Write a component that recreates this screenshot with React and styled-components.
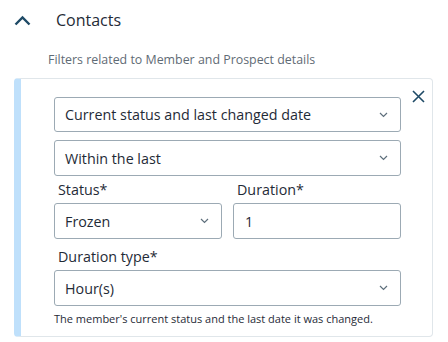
import React from "react";
import styled, { createGlobalStyle } from "styled-components";

const Global = createGlobalStyle`
  html, body { margin: 0; padding: 0; background: #ffffff; }
  body { font-family: "Open Sans", "Noto Sans", sans-serif; color: #1f2b37; }
  * { box-sizing: border-box; }
`;

const Page = styled.div`
  width: 448px;
  height: 342px;
  overflow: hidden;
  padding: 0 15px 0 14px;
`;

const Header = styled.div`
  display: flex;
  align-items: center;
  height: 40px;
`;

const Toggle = styled.span`
  display: flex;
  width: 42px;
  align-items: center;
  color: #1e4a66;
`;

const Title = styled.h2`
  margin: 0;
  font-size: 16px;
  font-weight: 400;
  color: #1f2b37;
`;

const Description = styled.p`
  margin: 12px 0 0 34px;
  font-size: 12.4px;
  line-height: 16px;
  color: #5f6b75;
`;

const Card = styled.div`
  position: relative;
  margin-top: 10px;
  border: 1px solid #e0e6ea;
  border-left: 7px solid #bfe0fb;
  border-radius: 4px;
  padding: 18px 31px 10px 33px;
  display: flex;
  flex-direction: column;
  gap: 8px;
`;

const Close = styled.button`
  position: absolute;
  top: 9px;
  right: 6px;
  width: 16px;
  height: 16px;
  padding: 0;
  border: none;
  background: none;
  color: #1e4a66;
  display: flex;
  align-items: center;
  justify-content: center;
`;

const Row = styled.div`
  display: grid;
  grid-template-columns: 168px 1fr;
  column-gap: 11px;
  margin-top: -4px;
`;

const Field = styled.div`
  display: flex;
  flex-direction: column;
`;

const Label = styled.label`
  font-size: 14.3px;
  line-height: 20px;
  padding-left: 4px;
  margin-bottom: 3px;
  color: #1f2b37;
`;

const Box = styled.div`
  height: ${(p) => p.$h || 36}px;
  border: 1px solid #9caab4;
  border-radius: 3px;
  display: flex;
  align-items: center;
  justify-content: space-between;
  padding: 0 12px 0 ${(p) => p.$pl || 10}px;
  font-size: 14.3px;
  color: #1f2b37;
  background: #fff;
`;

const Chevron = styled.span`
  display: flex;
  color: #5e6f7c;
`;

const Help = styled.div`
  font-size: 11px;
  line-height: 14px;
  color: #1f2b37;
  margin-top: -2px;
`;

const Down = () => (
  <Chevron>
    <svg width="9" height="6" viewBox="0 0 9 6">
      <path d="M1 1 L4.5 4.5 L8 1" fill="none" stroke="currentColor" strokeWidth="1.2" />
    </svg>
  </Chevron>
);

const Select = ({ children, h }) => (
  <Box $h={h}>
    <span>{children}</span>
    <Down />
  </Box>
);

export default function App() {
  return (
    <Page>
      <Global />
      <Header>
        <Toggle>
          <svg width="17" height="11" viewBox="0 0 17 11">
            <path d="M1.5 9.5 L8.5 2.5 L15.5 9.5" fill="none" stroke="currentColor" strokeWidth="2.4" />
          </svg>
        </Toggle>
        <Title>Contacts</Title>
      </Header>
      <Description>Filters related to Member and Prospect details</Description>
      <Card>
        <Close aria-label="Remove">
          <svg width="13" height="13" viewBox="0 0 13 13">
            <path d="M1 1 L12 12 M12 1 L1 12" stroke="currentColor" strokeWidth="1.6" />
          </svg>
        </Close>
        <Select h={35}>Current status and last changed date</Select>
        <Select>Within the last</Select>
        <Row>
          <Field>
            <Label>Status*</Label>
            <Select>Frozen</Select>
          </Field>
          <Field>
            <Label>Duration*</Label>
            <Box $pl={11}>1</Box>
          </Field>
        </Row>
        <Field>
          <Label>Duration type*</Label>
          <Select>Hour(s)</Select>
        </Field>
        <Help>The member's current status and the last date it was changed.</Help>
      </Card>
    </Page>
  );
}
